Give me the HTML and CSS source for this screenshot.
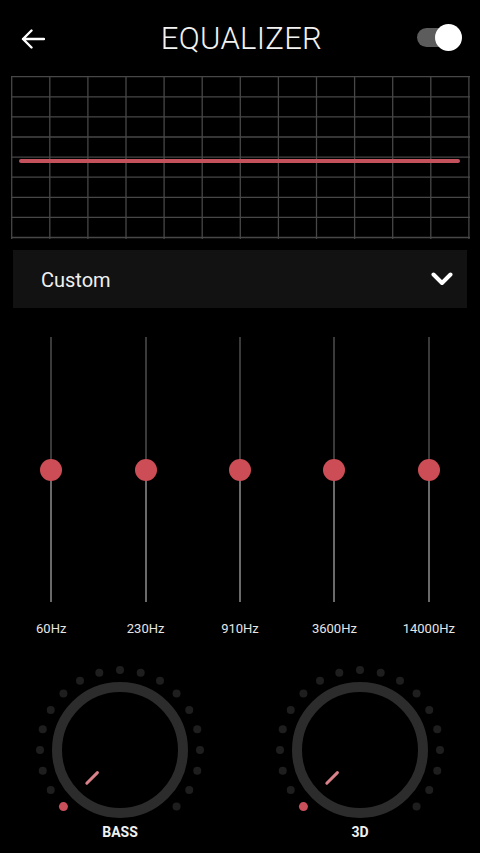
FILE: index.html
```html
<!DOCTYPE html>
<html lang="en">
<head>
    <meta charset="UTF-8">
    <meta name="viewport" content="width=device-width, initial-scale=1.0">
    <title>Equalizer</title>
    <link rel="stylesheet" href="styles.css">
</head>
<body>
    <!-- shared dial drawing -->
    <svg class="defs" width="0" height="0">
        <symbol id="dial" viewBox="0 0 170 154">
            <g fill="#1e1e1e">
                <circle cx="15.72" cy="125" r="4"/>
                <circle cx="7.73" cy="105.71" r="4"/>
                <circle cx="5" cy="85" r="4"/>
                <circle cx="7.73" cy="64.29" r="4"/>
                <circle cx="15.72" cy="45" r="4"/>
                <circle cx="28.43" cy="28.43" r="4"/>
                <circle cx="45" cy="15.72" r="4"/>
                <circle cx="64.29" cy="7.73" r="4"/>
                <circle cx="85" cy="5" r="4"/>
                <circle cx="105.71" cy="7.73" r="4"/>
                <circle cx="125" cy="15.72" r="4"/>
                <circle cx="141.57" cy="28.43" r="4"/>
                <circle cx="154.28" cy="45" r="4"/>
                <circle cx="162.27" cy="64.29" r="4"/>
                <circle cx="165" cy="85" r="4"/>
                <circle cx="162.27" cy="105.71" r="4"/>
                <circle cx="154.28" cy="125" r="4"/>
                <circle cx="141.57" cy="141.57" r="4"/>
            </g>
            <circle cx="28.43" cy="141.57" r="4.5" fill="#c9505a"/>
            <circle cx="85" cy="85" r="63" fill="none" stroke="#2c2c2c" stroke-width="10"/>
            <line x1="62.4" y1="107.6" x2="51.8" y2="118.2" stroke="#d9828a" stroke-width="3" stroke-linecap="round"/>
        </symbol>
    </svg>

    <header class="top-bar">
        <button class="back-btn" aria-label="Back">
            <svg width="24" height="20" viewBox="0 0 24 20">
                <path d="M23 10H2M10.5 1.5L2 10l8.5 8.5" fill="none" stroke="#fff" stroke-width="2.4" stroke-linecap="round" stroke-linejoin="round"/>
            </svg>
        </button>
        <h1 class="title">EQUALIZER</h1>
        <div class="switch"><span class="switch-knob"></span></div>
    </header>

    <div class="graph">
        <svg width="459" height="163" viewBox="0 0 459 163">
            <g stroke="#474747" stroke-width="1.3">
                <line x1="0" y1="0.7" x2="459" y2="0.7"/>
                <line x1="0" y1="20.8" x2="459" y2="20.8"/>
                <line x1="0" y1="40.9" x2="459" y2="40.9"/>
                <line x1="0" y1="61" x2="459" y2="61"/>
                <line x1="0" y1="81.1" x2="459" y2="81.1"/>
                <line x1="0" y1="101.2" x2="459" y2="101.2"/>
                <line x1="0" y1="121.3" x2="459" y2="121.3"/>
                <line x1="0" y1="141.4" x2="459" y2="141.4"/>
                <line x1="0" y1="161.5" x2="459" y2="161.5"/>
                <line x1="0.7" y1="0" x2="0.7" y2="163"/>
                <line x1="38.8" y1="0" x2="38.8" y2="163"/>
                <line x1="76.9" y1="0" x2="76.9" y2="163"/>
                <line x1="115" y1="0" x2="115" y2="163"/>
                <line x1="153.1" y1="0" x2="153.1" y2="163"/>
                <line x1="191.2" y1="0" x2="191.2" y2="163"/>
                <line x1="229.3" y1="0" x2="229.3" y2="163"/>
                <line x1="267.4" y1="0" x2="267.4" y2="163"/>
                <line x1="305.5" y1="0" x2="305.5" y2="163"/>
                <line x1="343.6" y1="0" x2="343.6" y2="163"/>
                <line x1="381.7" y1="0" x2="381.7" y2="163"/>
                <line x1="419.8" y1="0" x2="419.8" y2="163"/>
                <line x1="457.9" y1="0" x2="457.9" y2="163"/>
            </g>
            <line x1="10" y1="85" x2="447" y2="85" stroke="#c4525c" stroke-width="4" stroke-linecap="round"/>
        </svg>
    </div>

    <div class="preset">
        <span class="preset-name">Custom</span>
        <svg width="22" height="14" viewBox="0 0 22 14">
            <path d="M2.5 2.5L11 11l8.5-8.5" fill="none" stroke="#fff" stroke-width="4" stroke-linecap="round" stroke-linejoin="round"/>
        </svg>
    </div>

    <div class="bands">
        <div class="band">
            <div class="track"><span class="thumb"></span></div>
            <div class="band-label">60Hz</div>
        </div>
        <div class="band">
            <div class="track"><span class="thumb"></span></div>
            <div class="band-label">230Hz</div>
        </div>
        <div class="band">
            <div class="track"><span class="thumb"></span></div>
            <div class="band-label">910Hz</div>
        </div>
        <div class="band">
            <div class="track"><span class="thumb"></span></div>
            <div class="band-label">3600Hz</div>
        </div>
        <div class="band">
            <div class="track"><span class="thumb"></span></div>
            <div class="band-label">14000Hz</div>
        </div>
    </div>

    <div class="dials">
        <div class="dial">
            <svg width="170" height="154"><use href="#dial"/></svg>
            <div class="dial-label">BASS</div>
        </div>
        <div class="dial">
            <svg width="170" height="154"><use href="#dial"/></svg>
            <div class="dial-label">3D</div>
        </div>
    </div>
</body>
</html>
```

FILE: styles.css
```css
body {
    margin: 0;
    background-color: #000;
    color: #fff;
    font-family: Roboto, "Liberation Sans", sans-serif;
    width: 480px;
    height: 853px;
    overflow: hidden;
}

.defs {
    position: absolute;
}

.top-bar {
    display: grid;
    grid-template-columns: 1fr auto 1fr;
    align-items: center;
    height: 76px;
    padding: 0 18px 0 21px;
}

.back-btn {
    justify-self: start;
    background: none;
    border: none;
    padding: 0;
    display: flex;
    margin-top: 1px;
}

.title {
    margin: 0;
    font-size: 31px;
    font-weight: 300;
    letter-spacing: 0.3px;
    color: #f2f2f2;
}

.switch {
    justify-self: end;
    position: relative;
    width: 45px;
    height: 27px;
    margin-top: -2px;
}

.switch::before {
    content: '';
    position: absolute;
    left: 0;
    top: 4px;
    width: 40px;
    height: 19px;
    border-radius: 10px;
    background-color: #5c5c5c;
}

.switch-knob {
    position: absolute;
    right: 0;
    top: 0;
    width: 27px;
    height: 27px;
    border-radius: 50%;
    background-color: #fff;
}

.graph {
    padding-left: 11px;
    height: 163px;
}

.graph svg {
    display: block;
}

.preset {
    display: flex;
    align-items: center;
    justify-content: space-between;
    margin: 11px 13px 0;
    height: 58px;
    padding: 0 14px 0 28px;
    background-color: #121212;
}

.preset-name {
    font-size: 20px;
    color: #f0f0f0;
    margin-top: 2px;
}

.bands {
    display: grid;
    grid-template-columns: repeat(5, 1fr);
    padding: 29px 4px 0;
}

.band {
    display: flex;
    flex-direction: column;
    align-items: center;
}

.track {
    position: relative;
    width: 2px;
    height: 265px;
    background: linear-gradient(#3a3a3a 50%, #6a6a6a 50%);
}

.thumb {
    position: absolute;
    left: 50%;
    top: 133px;
    width: 22px;
    height: 22px;
    margin: -11px 0 0 -11px;
    border-radius: 50%;
    background-color: #cc4d55;
}

.band-label {
    margin-top: 19px;
    font-size: 13px;
    line-height: 16px;
    color: #e6e6e6;
}

.dials {
    display: grid;
    grid-template-columns: 1fr 1fr;
    margin-top: 28px;
}

.dial {
    display: flex;
    flex-direction: column;
    align-items: center;
}

.dial svg {
    display: block;
}

.dial-label {
    margin-top: 5px;
    font-size: 14px;
    line-height: 16px;
    font-weight: 700;
    color: #f0f0f0;
}
```
